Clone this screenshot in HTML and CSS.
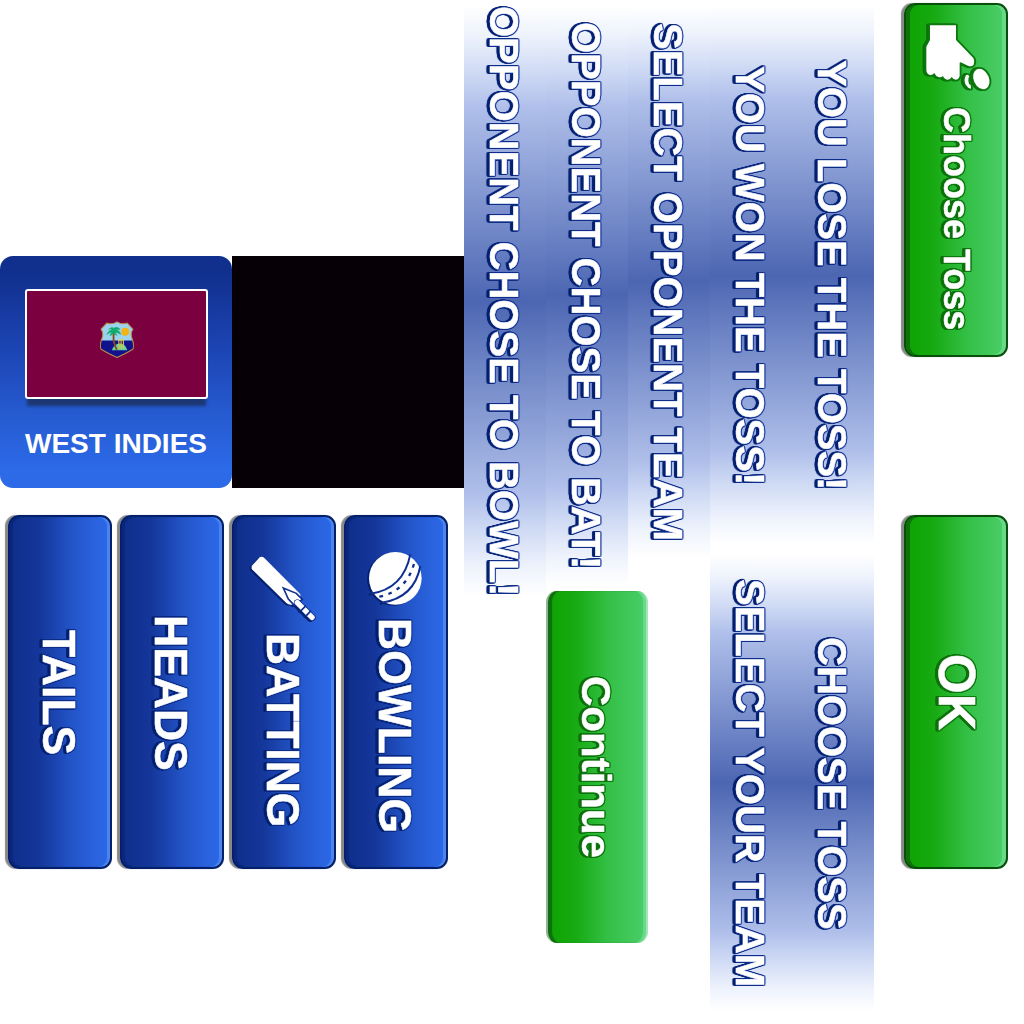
FILE: index.html
```html
<!DOCTYPE html>
<html lang="en">
<head>
<meta charset="utf-8">
<title>Cricket Toss</title>
<link rel="stylesheet" href="styles.css">
</head>
<body>
<main class="sheet">
  <section class="left">
    <div class="teams">
      <article class="team">
        <div class="flag">
          <svg class="crest" viewBox="0 0 34 36">
            <path d="M1.5 8 L7 2 Q12 4 17 .8 Q22 4 27 2 L32.500 8 Q29.500 12 32 18 Q34 24 32.500 27.500 Q26 31.500 17 35.500 Q8 31.500 1.500 27.500 Q0 24 2 18 Q4.500 12 1.500 8Z" fill="#9bd3ee"/>
            <path d="M2 19H32Q34 24 32.500 27.500Q26 31.500 17 35.500Q8 31.500 1.500 27.500Q0 24 2 18Z" fill="#12128c"/>
            <path d="M12 28.500Q14 22 20 22Q25 22 27 28.500Z" fill="#69cf9c"/>
            <path d="M14 10Q13 18 14.500 22Q15.500 26 17 28" fill="none" stroke="#8a4a1c" stroke-width="1.800"/>
            <path d="M7 13Q9 9 12.500 8.500Q10 7 9 8Q12 5.500 14 7Q17 5 20 8Q17 8 16 8.500Q20 9.500 20.500 13Q18 11 15 11L17 14Q14 13 13.500 11Q13 14 10 14L12 11Q9 11 7 13Z" fill="#10ab6c" stroke="#10ab6c" stroke-width=".6"/>
            <circle cx="25" cy="10.500" r="3.900" fill="#f2b414"/>
            <path d="M18.800 27V18.500M21 27V18.500M23.200 27V18.500M18 18.500H23.800" stroke="#efca3a" fill="none"/>
            <path d="M1.500 8 L7 2 Q12 4 17 .8 Q22 4 27 2 L32.500 8 Q29.500 12 32 18 Q34 24 32.500 27.500 Q26 31.500 17 35.500 Q8 31.500 1.500 27.500 Q0 24 2 18 Q4.500 12 1.500 8Z" fill="none" stroke="#b98a45"/>
          </svg>
        </div>
        <h2 class="team-name">WEST INDIES</h2>
      </article>
      <div class="empty-slot"></div>
    </div>
    <div class="choices">
      <button class="btn blue"><span class="label center">TAILS</span></button>
      <button class="btn blue"><span class="label center">HEADS</span></button>
      <button class="btn blue">
        <svg class="icon tall" viewBox="27 36 300 345">
          <path d="M80 183 L104 157 Q111 153 118 159 L226 268 V280 L212 293 L200 299 Q190 300 184 294 L80 192Z" fill="#fff"/>
          <path d="M175 249 L190 282 L208 301 L232 283 L214 265Z" fill="#fff" stroke="#0e2f90" stroke-width="5"/>
          <path d="M217 293L262 338" stroke="#0e2f90" stroke-width="20" stroke-linecap="round"/>
          <path d="M217 293L261 337" stroke="#fff" stroke-width="16" stroke-linecap="round"/>
          <path d="M226 319L243 302M242 334L258 317" stroke="#0e2f90" stroke-width="5"/>
        </svg>
        <span class="label">BATTING</span>
      </button>
      <button class="btn blue">
        <svg class="icon" viewBox="363 36 300 300">
          <circle cx="511" cy="220" r="79" fill="#fff"/>
          <g fill="none" stroke="#0e2f90">
            <path d="M437 266 Q535 252 556 148" stroke-width="6"/>
            <path d="M471 293 Q568 278 586 183" stroke-width="6"/>
            <path d="M463 275 Q547 258 569 169" stroke-width="7" stroke-dasharray="11 17"/>
          </g>
        </svg>
        <span class="label">BOWLING</span>
      </button>
    </div>
  </section>

  <section class="middle">
    <div class="banner b1"><span class="title">OPPONENT CHOSE TO BOWL!</span></div>
    <div class="banner b2"><span class="title">OPPONENT CHOSE TO BAT!</span></div>
    <div class="banner b3"><span class="title">SELECT OPPONENT TEAM</span></div>
    <button class="btn green continue"><span class="label center">Continue</span></button>
  </section>

  <section class="right">
    <div class="banner b4"><span class="title">YOU WON THE TOSS!</span></div>
    <div class="banner b4"><span class="title">YOU LOSE THE TOSS!</span></div>
    <div class="banner b5"><span class="title">SELECT YOUR TEAM</span></div>
    <div class="banner b5"><span class="title">CHOOSE TOSS</span></div>
  </section>

  <section class="actions">
    <button class="btn green toss">
      <svg class="icon" viewBox="48 15 300 300">
        <g fill="#fff" stroke="#0c780e" stroke-width="11" stroke-linejoin="round" paint-order="stroke">
          <path d="M120 76H198V120L250 174Q256 184 251 194Q244 202 234 197L212 187L209 188V228Q206 239 197 239Q189 238 185 231Q180 240 172 239Q163 238 159 228Q153 234 145 231Q137 228 133 219Q126 227 118 224Q110 221 109 210V140L120 120Z"/>
          <path d="M228 226Q220 240 227 254Q234 265 243 266L242 255Q235 252 235 243Q234 234 238 229Q232 222 228 226Z"/>
          <ellipse cx="274" cy="237" rx="23" ry="32" transform="rotate(-24 274 237)"/>
        </g>
      </svg>
      <span class="label">Choose Toss</span>
    </button>
    <button class="btn green ok"><span class="label center">OK</span></button>
  </section>
</main>
</body>
</html>
```
FILE: styles.css
```css
* { box-sizing: border-box; }

body {
  margin: 0;
  background: #fff;
  font-family: "Liberation Sans", Arial, sans-serif;
  font-weight: bold;
  color: #fff;
}

.sheet {
  display: flex;
  width: 1024px;
  height: 1024px;
  overflow: hidden;
}

.left { width: 464px; padding-top: 256px; }
.teams { display: flex; }

.team {
  width: 232px;
  height: 232px;
  padding-top: 33px;
  border-radius: 13px;
  background: linear-gradient(#11308e 8%, #1a41ae 35%, #2558cd 65%, #2c6ae8 92%);
  text-align: center;
}

.flag {
  display: flex;
  align-items: center;
  justify-content: center;
  width: 183px;
  height: 110px;
  margin-left: 25px;
  padding-bottom: 9px;
  border: 2px solid #fff;
  border-radius: 3px;
  background: #7b003f;
  box-shadow: 0 9px 3px -2px #1c3773;
}
.crest { width: 36px; height: 37px; }

.team-name {
  margin: 28px 0 0;
  font-size: 28px;
  line-height: 33px;
  font-kerning: none;
}

.empty-slot { width: 232px; height: 232px; background: #060006; }

.choices {
  display: flex;
  gap: 8px;
  padding: 27px 0 0 8px;
}

.btn {
  display: flex;
  flex-direction: column;
  align-items: flex-start;
  justify-content: flex-start;
  width: 104px;
  height: 354px;
  flex: none;
  padding: 0;
  border: 2px solid;
  border-radius: 11px;
  font: inherit;
  color: #fff;
}

.blue {
  border-color: #04206a;
  background: linear-gradient(90deg, #11308e 8%, #15379b 30%, #2253c6 60%, #2a63de 85%, #2c68e8);
  box-shadow: inset 3px 0 1px #0b267c, inset -3px 0 0 #4a85ee, -3px 0 1px #888;
}

.green {
  border-color: #07500a;
  background: linear-gradient(90deg, #0fa505 7%, #17aa12 28%, #34c047 62%, #48cc65 95%);
  box-shadow: inset 4px 0 0 #10700c, inset -4px 0 0 #66da8a, -3px 0 1px #888;
}

/* Sideways lettering: a thin outline on every side, extruded to the left. */
.label,
.title {
  writing-mode: vertical-rl;
  white-space: nowrap;
  line-height: 1;
  font-kerning: none;
  -webkit-text-stroke: .5px #fff;
  transform: scaleX(1.02);
}

.label { align-self: flex-start; }
.label.center { margin-top: auto; margin-bottom: auto; }

.blue .label {
  margin-left: 26px;
  padding-top: 1px;
  font-size: 44.5px;
  filter:
    drop-shadow(1px 0 0 #123698aa) drop-shadow(0 1px 0 #123698aa) drop-shadow(0 -1px 0 #123698aa)
    drop-shadow(-1px 0 0 #04206f) drop-shadow(-1px 0 0 #04206f) drop-shadow(-1px 0 0 #04206f);
}

.green .label {
  filter:
    drop-shadow(1px 0 0 #0c780e) drop-shadow(0 1px 0 #0c780e) drop-shadow(0 -1px 0 #0c780e)
    drop-shadow(-1px 0 0 #0d700b) drop-shadow(-1px 0 0 #0d700b) drop-shadow(-1px 0 0 #0d700b);
}

.icon {
  display: block;
  width: 100px;
  height: 100px;
  flex: none;
  filter: drop-shadow(-2px 1px 0 #04206f);
}
.icon.tall { height: 115px; }
.toss .icon { filter: drop-shadow(-2px 0 0 #0d700b); }
.toss .label { margin-left: 32px; padding-top: 2px; font-size: 36px; }
.ok .label { margin-left: 25px; font-size: 51px; transform: none; }

.continue {
  width: 102px;
  height: 352px;
  border-color: #8fb890;
  border-right-color: #a2e6b6;
  border-width: 0 2px;
  box-shadow: inset 4px 0 1px #126c14, inset -3px 0 0 #66da8a;
}
.continue .label { margin-left: 27px; font-size: 42px; transform: scaleX(.98); }

.banner {
  display: flex;
  align-items: center;
  width: 82px;
  background: linear-gradient(#fff 1%, #edf2fc 6%, #cfdaf4 12%, #afbfea 18%, #4c66b2 50%, #afbfea 82%, #cfdaf4 88%, #edf2fc 94%, #fff 99%);
}
.title {
  margin-left: 20px;
  padding-top: 1px;
  font-size: 40px;
  filter:
    drop-shadow(1px 0 0 #1839a0cc) drop-shadow(0 1px 0 #1839a099) drop-shadow(0 -1px 0 #1839a099)
    drop-shadow(-1px 0 0 #04206f) drop-shadow(-1px 0 0 #04206f) drop-shadow(-1px 0 0 #04206f);
}

.middle {
  display: grid;
  grid-template-columns: repeat(3, 82px);
  grid-template-rows: 591px 352px;
  align-items: start;
  width: 246px;
}
.middle .continue { grid-column: 2; }
.b1 { height: 602px; }
.b2 { height: 591px; }
.b3 { height: 563px; }

.right {
  display: grid;
  grid-template-columns: repeat(2, 82px);
  grid-template-rows: 550px 466px;
  align-items: start;
  width: 164px;
}
.b4 { height: 550px; }
.b5 { height: 466px; }

.actions {
  display: flex;
  flex-direction: column;
  gap: 158px;
  padding: 3px 0 0 30px;
}
```
